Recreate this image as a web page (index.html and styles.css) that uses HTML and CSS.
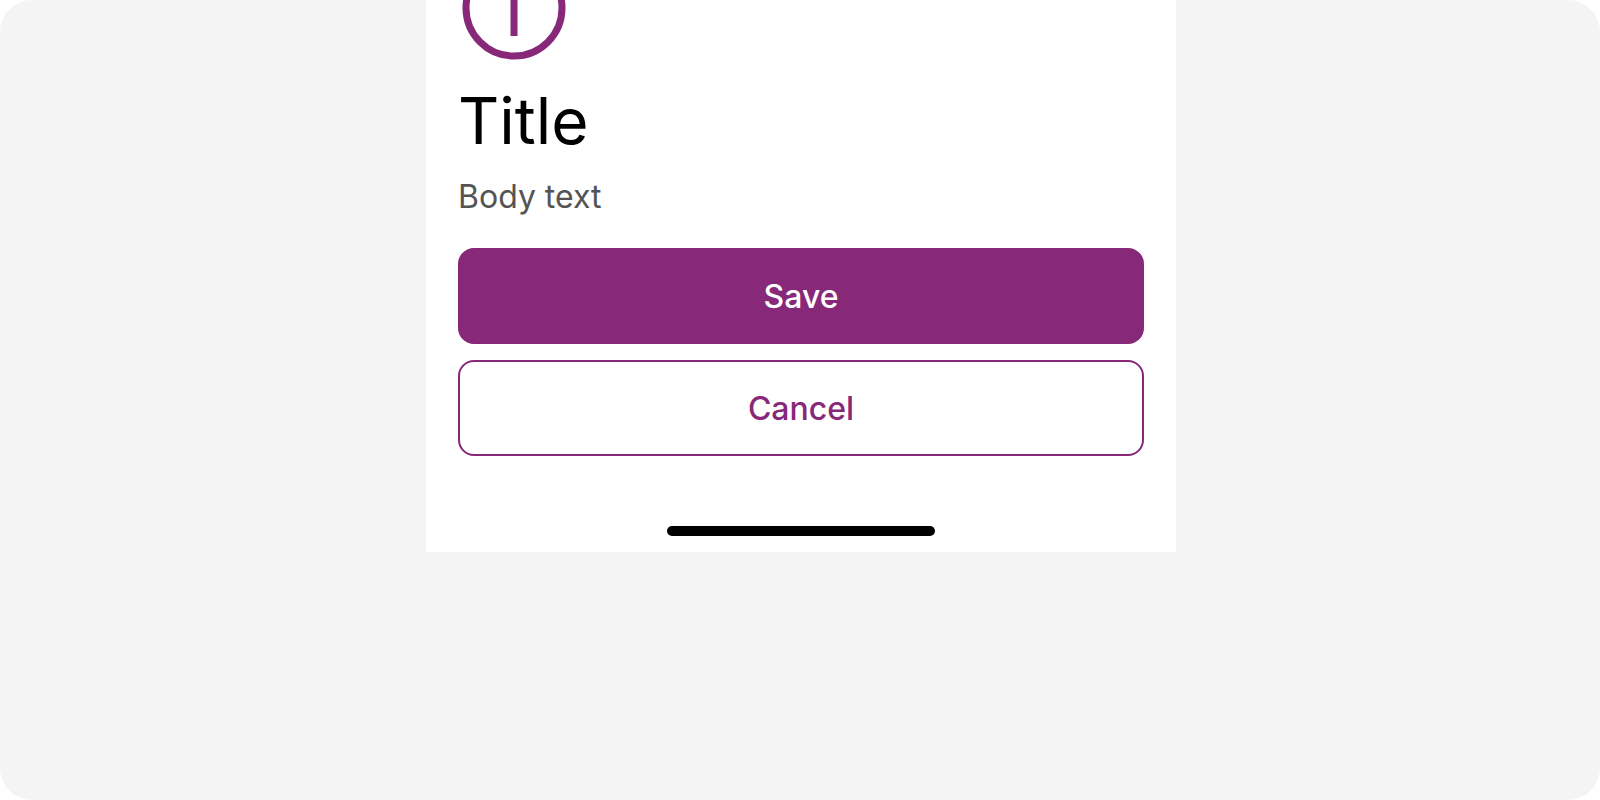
FILE: index.html
```html
<!DOCTYPE html>
<html lang="en">
<head>
<meta charset="utf-8">
<meta name="viewport" content="width=device-width, initial-scale=1">
<title>Title</title>
<link rel="stylesheet" href="styles.css">
</head>
<body>
<div class="canvas">
  <main class="sheet">
    <svg class="sheet-icon" viewBox="0 48 112 64" fill="none" aria-hidden="true">
      <circle cx="56" cy="56" r="48" stroke="currentColor" stroke-width="7"/>
      <path d="M56 40V84" stroke="currentColor" stroke-width="7"/>
    </svg>
    <h1 class="sheet-title">Title</h1>
    <p class="sheet-body">Body text</p>
    <div class="actions">
      <button class="button button-primary" type="button">Save</button>
      <button class="button button-secondary" type="button">Cancel</button>
    </div>
    <div class="home-indicator"></div>
  </main>
</div>
</body>
</html>
```
FILE: styles.css
```css
* {
  box-sizing: border-box;
}

body {
  margin: 0;
  background: #fff;
  font-family: Inter, "Liberation Sans", sans-serif;
}

.canvas {
  display: flex;
  justify-content: center;
  align-items: flex-start;
  min-height: 100vh;
  padding-left: 2px;
  border-radius: 32px;
  background: #f4f4f4;
}

.sheet {
  display: flex;
  flex-direction: column;
  width: 100%;
  max-width: 750px;
  padding: 0 32px 16px;
  background: #fff;
}

.sheet-icon {
  width: 112px;
  height: 64px;
  color: #872878;
}

.sheet-title {
  margin: 17px 0 0;
  font-size: 64px;
  font-weight: 400;
  line-height: 80px;
  color: #000;
}

.sheet-body {
  margin: 12px 0 0;
  font-size: 32px;
  line-height: 48px;
  color: #545454;
}

.actions {
  display: flex;
  flex-direction: column;
  gap: 16px;
  margin-top: 27px;
}

.button {
  padding: 23px 32px 21px;
  border: 2px solid #872878;
  border-radius: 16px;
  font-family: inherit;
  font-size: 32px;
  font-weight: 500;
  line-height: 48px;
  cursor: pointer;
}

.button-primary {
  background: #872878;
  color: #fff;
}

.button-secondary {
  background: #fff;
  color: #872878;
}

.home-indicator {
  align-self: center;
  width: 268px;
  height: 10px;
  margin-top: 70px;
  border-radius: 5px;
  background: #000;
}
```
